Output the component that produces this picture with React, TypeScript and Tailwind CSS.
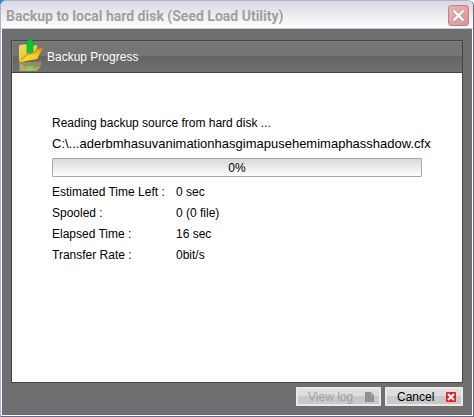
const stats = [
  { label: "Estimated Time Left :", value: "0 sec" },
  { label: "Spooled :", value: "0 (0 file)" },
  { label: "Elapsed Time :", value: "16 sec" },
  { label: "Transfer Rate :", value: "0bit/s" },
];

function FolderIcon() {
  return (
    <svg width="26" height="35" viewBox="0 0 26 35" className="shrink-0" aria-hidden="true">
      <defs>
        <linearGradient id="folderBack" x1="0" y1="0" x2="1" y2="1">
          <stop offset="0" stopColor="#f2e250" />
          <stop offset="1" stopColor="#d8b82c" />
        </linearGradient>
        <linearGradient id="folderFront" x1="0" y1="1" x2="1" y2="0">
          <stop offset="0" stopColor="#ffd82a" />
          <stop offset="0.55" stopColor="#f9cb2a" />
          <stop offset="1" stopColor="#d88c18" />
        </linearGradient>
      </defs>
      {/* reflection */}
      <path d="M1 25 H19 L24 24 L22 31 L19 34 H1 Z" fill="#a59c50" opacity="0.7" />
      <path d="M2 26 L9 31 L22 30 L18 34 H2 Z" fill="#cfc878" opacity="0.5" />
      <path d="M9 29 H15 V32 L12 34 L8 33 Z" fill="#7fdc6a" opacity="0.7" />
      {/* folder */}
      <path d="M1 9 L2 8 L8 7 L10 9 L19 8 L20 21 L3 25 L1 24 Z" fill="url(#folderBack)" />
      <path d="M2 25 L9 18 L17 16 L19 12 L25 11 L19 22 Z" fill="url(#folderFront)" />
      <path d="M3 23 L9 17.5 L17 15.5 L19 11.5 L25 10.5" fill="none" stroke="#b87a1c" />
      <path d="M9 16 V7 H7 L12 1 L17 7 H15 V15 Z" fill="#0bc434" stroke="#079a28" strokeWidth="0.5" />
    </svg>
  );
}

function LogIcon() {
  return (
    <svg width="9" height="10" viewBox="0 0 9 10" aria-hidden="true">
      <path d="M0 0 H6 L9 3 V10 H0 Z" fill="#8e8e8e" />
      <path d="M6 0 V3 H9" fill="none" stroke="#b0b0b0" />
      <path d="M2 4.5 H7 M2 6.5 H7 M2 8.5 H7" stroke="#a2a2a2" strokeDasharray="1 1" />
    </svg>
  );
}

function CancelIcon() {
  return (
    <svg width="10" height="10" viewBox="0 0 10 10" aria-hidden="true">
      <rect width="10" height="10" rx="1" fill="#ec1c24" />
      <path d="M2 2 L8 8 M8 2 L2 8" stroke="#fff" strokeWidth="2" />
    </svg>
  );
}

const buttonStyle =
  "flex h-[19px] items-center border-2 border-[#e9e9e9] bg-linear-to-b from-[#dedede] from-50% to-[#c9c9c9] to-50% pl-2.5 pr-[5px] text-xs";

export default function App() {
  return (
    <div className="flex min-h-screen flex-col bg-linear-to-r from-[#1a8fd0] from-50% to-white to-50% font-['Liberation_Sans',Arial,sans-serif] text-black">
      <div className="flex flex-1 flex-col overflow-hidden rounded-t-md border border-[#b0b0c6] border-r-[#68688a] border-b-[#68688a] bg-white">
        <header className="flex h-7 shrink-0 items-center justify-between border-b border-[#c4cad8] bg-linear-to-b from-[#d8d8e4] to-white pl-[5px] pr-1">
          <h1 className="pt-0.5 font-[Roboto,'Trebuchet_MS',sans-serif] text-sm font-bold whitespace-nowrap text-[#a0a0a0]">
            Backup to local hard disk (Seed Load Utility)
          </h1>
          <button
            type="button"
            aria-label="Close"
            className="mt-0.5 flex h-[21px] w-[21px] items-center justify-center rounded-[3px] border border-[#c08088] bg-linear-to-br from-[#e8b4b4] to-[#dc9494]"
          >
            <svg width="13" height="13" viewBox="0 0 13 13" aria-hidden="true">
              <path d="M1.5 1.5 L11.5 11.5 M11.5 1.5 L1.5 11.5" stroke="#b06c78" strokeWidth="3.6" />
              <path d="M1.5 1.5 L11.5 11.5 M11.5 1.5 L1.5 11.5" stroke="#fff" strokeWidth="2.6" />
            </svg>
          </button>
        </header>

        <div className="mx-px mb-px flex flex-1 flex-col border-x border-b border-[#68688a] bg-[#6f6f6f] px-2 pt-[11px] pb-2">
          <main className="flex flex-1 flex-col border border-[#444444] bg-white">
            <div className="flex h-8 shrink-0 items-center border-b border-[#444444] bg-linear-to-b from-[#757575] from-50% via-[#656565] via-50% to-[#707070] pl-1.5 shadow-[inset_1px_1px_0_#808080]">
              <div className="-mt-1">
                <FolderIcon />
              </div>
              <h2 className="ml-[3px] text-xs text-white">Backup Progress</h2>
            </div>

            <div className="px-10 pt-10">
              <p className="text-xs leading-[21px]">Reading backup source from hard disk ...</p>
              <p className="text-[13px] leading-5 whitespace-nowrap">
                C:\...aderbmhasuvanimationhasgimapusehemimaphasshadow.cfx
              </p>
              <div
                role="progressbar"
                aria-label="Backup progress"
                aria-valuenow={0}
                aria-valuemin={0}
                aria-valuemax={100}
                className="mt-1 flex h-[19px] items-center justify-center rounded-[1px] border border-[#a8a8a8] bg-linear-to-b from-[#d8d8d8] to-white text-xs"
              >
                0%
              </div>
              <dl className="mt-[5px] grid grid-cols-[124px_1fr] text-xs leading-[21px]">
                {stats.map((stat) => (
                  <div key={stat.label} className="contents">
                    <dt className="whitespace-nowrap">{stat.label}</dt>
                    <dd>{stat.value}</dd>
                  </div>
                ))}
              </dl>
            </div>
          </main>

          <footer className="mt-1 flex shrink-0 justify-end gap-1">
            <button type="button" disabled className={`${buttonStyle} w-[85px] justify-between text-[#a0a0a0]`}>
              View log
              <LogIcon />
            </button>
            <button type="button" className={`${buttonStyle} w-[78px] justify-between`}>
              Cancel
              <CancelIcon />
            </button>
          </footer>
        </div>
      </div>
    </div>
  );
}
